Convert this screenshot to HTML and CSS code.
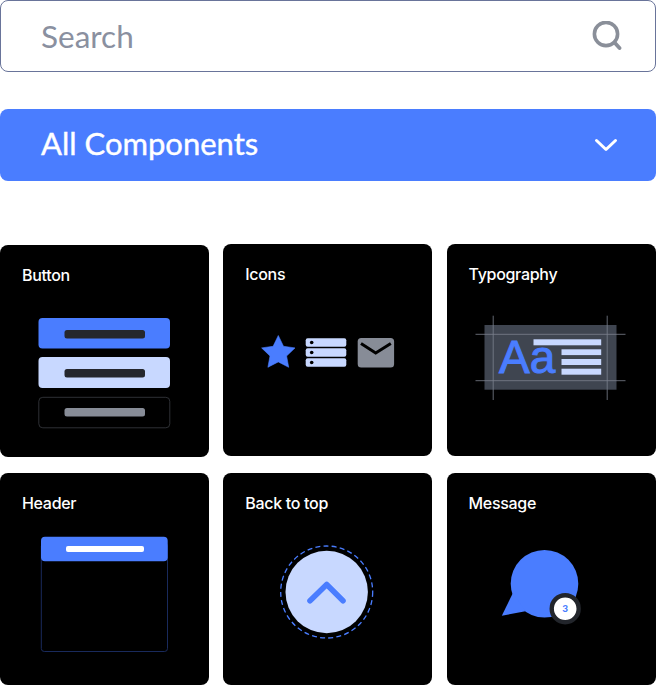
FILE: index.html
```html
<!DOCTYPE html>
<html lang="en">
<head>
    <meta charset="UTF-8">
    <meta name="viewport" content="width=device-width, initial-scale=1.0">
    <title>Components</title>
    <link rel="stylesheet" href="styles.css">
</head>
<body>
    <div class="page">
        <div class="search">
            <span>Search</span>
            <svg class="search-icon" width="30" height="30" viewBox="0 0 30 30">
                <circle cx="14" cy="13" r="11.6" fill="none" stroke="#8a8f99" stroke-width="3.6"/>
                <path d="M22.5 21.5L27.5 27" fill="none" stroke="#8a8f99" stroke-width="3.8" stroke-linecap="round"/>
            </svg>
        </div>

        <div class="dropdown">
            <span class="dropdown-label">All Components</span>
            <svg width="24" height="14" viewBox="0 0 24 14">
                <path d="M2.5 2.5L12 11.5L21.5 2.5" fill="none" stroke="#fff" stroke-width="3" stroke-linecap="round" stroke-linejoin="round"/>
            </svg>
        </div>

        <div class="cards">
            <div class="card card-low">
                <div class="card-title">Button</div>
                <svg class="art" viewBox="0 42 209 170">
                    <rect x="38.5" y="73" width="131.5" height="30.5" rx="4" fill="#4a7dff"/>
                    <rect x="64.5" y="85" width="80.5" height="8.5" rx="2.5" fill="#25272d"/>
                    <rect x="38.5" y="112" width="131.5" height="31" rx="4" fill="#c8d8ff"/>
                    <rect x="64.5" y="124" width="80.5" height="8.5" rx="2.5" fill="#25272d"/>
                    <rect x="38.8" y="152.3" width="131" height="30.5" rx="4" fill="none" stroke="#3a3c42" stroke-width="0.8"/>
                    <rect x="64.5" y="163" width="80.5" height="8.5" rx="2.5" fill="#878c97"/>
                </svg>
            </div>

            <div class="card">
                <div class="card-title">Icons</div>
                <svg class="art" viewBox="0 42 209 170">
                    <path d="M55.3 91.5L60.5 102.3L72 103.9L63.6 112L65.7 123.3L55.3 117.9L44.9 123.3L47 112L38.6 103.9L50.1 102.3Z" fill="#4a7dff" stroke="#4a7dff" stroke-width="0.6" stroke-linejoin="round"/>
                    <rect x="82.7" y="94.3" width="40.6" height="8.4" rx="2" fill="#c8d8ff"/>
                    <rect x="82.7" y="104.3" width="40.6" height="8.4" rx="2" fill="#c8d8ff"/>
                    <rect x="82.7" y="114.3" width="40.6" height="8.4" rx="2" fill="#c8d8ff"/>
                    <circle cx="88.7" cy="98.5" r="1.8" fill="#000"/>
                    <circle cx="88.7" cy="108.5" r="1.8" fill="#000"/>
                    <circle cx="88.7" cy="118.5" r="1.8" fill="#000"/>
                    <rect x="134.7" y="94" width="36.4" height="29.4" rx="3.5" fill="#878c97"/>
                    <path d="M138 99.5L152.7 109L167.8 99.5" fill="none" stroke="#000" stroke-width="3"/>
                </svg>
            </div>

            <div class="card">
                <div class="card-title">Typography</div>
                <svg class="art" viewBox="0 42 209 170">
                    <rect x="37.5" y="81" width="132" height="64.7" fill="#3f4550"/>
                    <path d="M28.5 90.3H178.5M28.5 136.7H178.5M46.2 71.7V156M160.2 71.7V156" fill="none" stroke="#7c828e" stroke-width="0.8"/>
                    <text class="art-aa" x="52" y="129.3">Aa</text>
                    <rect x="86.5" y="95.3" width="67.7" height="6" fill="#c8d8ff"/>
                    <rect x="114.5" y="105.3" width="39.7" height="5.8" fill="#c8d8ff"/>
                    <rect x="114.5" y="115" width="39.7" height="6" fill="#c8d8ff"/>
                    <rect x="114.5" y="124.7" width="39.7" height="6" fill="#c8d8ff"/>
                </svg>
            </div>

            <div class="card">
                <div class="card-title">Header</div>
                <svg class="art" viewBox="0 42 209 170">
                    <rect x="41.3" y="70" width="126.2" height="108.5" rx="3" fill="none" stroke="#1c2f66" stroke-width="0.9"/>
                    <rect x="41" y="63.7" width="126.7" height="24.6" rx="4" fill="#4a7dff"/>
                    <rect x="66" y="73" width="78" height="6" rx="2" fill="#fff"/>
                </svg>
            </div>

            <div class="card">
                <div class="card-title">Back to top</div>
                <svg class="art" viewBox="0 42 209 170">
                    <circle cx="103.7" cy="119" r="46" fill="none" stroke="#4a7dff" stroke-width="1.3" stroke-dasharray="5 3.2"/>
                    <circle cx="103.7" cy="119" r="41.2" fill="#c8d8ff"/>
                    <path d="M87 127.7L103.7 111.5L120 127.7" fill="none" stroke="#4a7dff" stroke-width="5.6" stroke-linecap="round" stroke-linejoin="round"/>
                </svg>
            </div>

            <div class="card">
                <div class="card-title">Message</div>
                <svg class="art" viewBox="0 42 209 170">
                    <circle cx="97.5" cy="110.7" r="33.8" fill="#4a7dff"/>
                    <path d="M65.8 120.3L54.8 142.7L78.5 138.3Z" fill="#4a7dff"/>
                    <circle cx="118.2" cy="135.7" r="13.5" fill="#fff" stroke="#22252b" stroke-width="4.4"/>
                    <text class="art-badge" x="118.2" y="139">3</text>
                </svg>
            </div>
        </div>
    </div>
</body>
</html>
```

FILE: styles.css
```css
body {
    margin: 0;
    font-family: Lato, sans-serif;
    background-color: #fff;
}

.page {
    width: 656px;
}

.search {
    height: 72px;
    box-sizing: border-box;
    border: 1px solid #69749a;
    border-radius: 8px;
    padding: 0 33px 0 40px;
    margin-bottom: 37px;
    display: flex;
    align-items: center;
    justify-content: space-between;
    font-size: 31.5px;
    color: #8a90a0;
}

.dropdown {
    height: 72px;
    box-sizing: border-box;
    background-color: #4a7dff;
    border-radius: 8px;
    padding: 0 38px 0 41px;
    margin-bottom: 63px;
    display: flex;
    align-items: center;
    justify-content: space-between;
    font-size: 31px;
    color: white;
}

.dropdown-label {
    margin-top: -4px;
    -webkit-text-stroke: 0.4px white;
}

.cards {
    display: grid;
    grid-template-columns: repeat(3, 209px);
    gap: 17px 14.25px;
}

.card {
    height: 212px;
    background-color: #000;
    border-radius: 8px;
    overflow: hidden;
}

/* the first card sits a pixel lower than its neighbours */
.card-low {
    margin-top: 1px;
    margin-bottom: -1px;
}

.card-title {
    height: 42px;
    box-sizing: border-box;
    padding: 19px 22px 0;
    font-family: Inter, sans-serif;
    font-size: 16px;
    font-weight: 500;
    line-height: 22px;
    letter-spacing: -0.3px;
    color: white;
}

.art {
    display: block;
    width: 100%;
    height: 170px;
}

.art-aa {
    font-family: "Liberation Sans", sans-serif;
    font-size: 46px;
    fill: #4a7dff;
    stroke: #4a7dff;
    stroke-width: 1px;
}

.art-badge {
    font-family: Lato, sans-serif;
    font-size: 10px;
    font-weight: 900;
    fill: #4a7dff;
    text-anchor: middle;
}
```
